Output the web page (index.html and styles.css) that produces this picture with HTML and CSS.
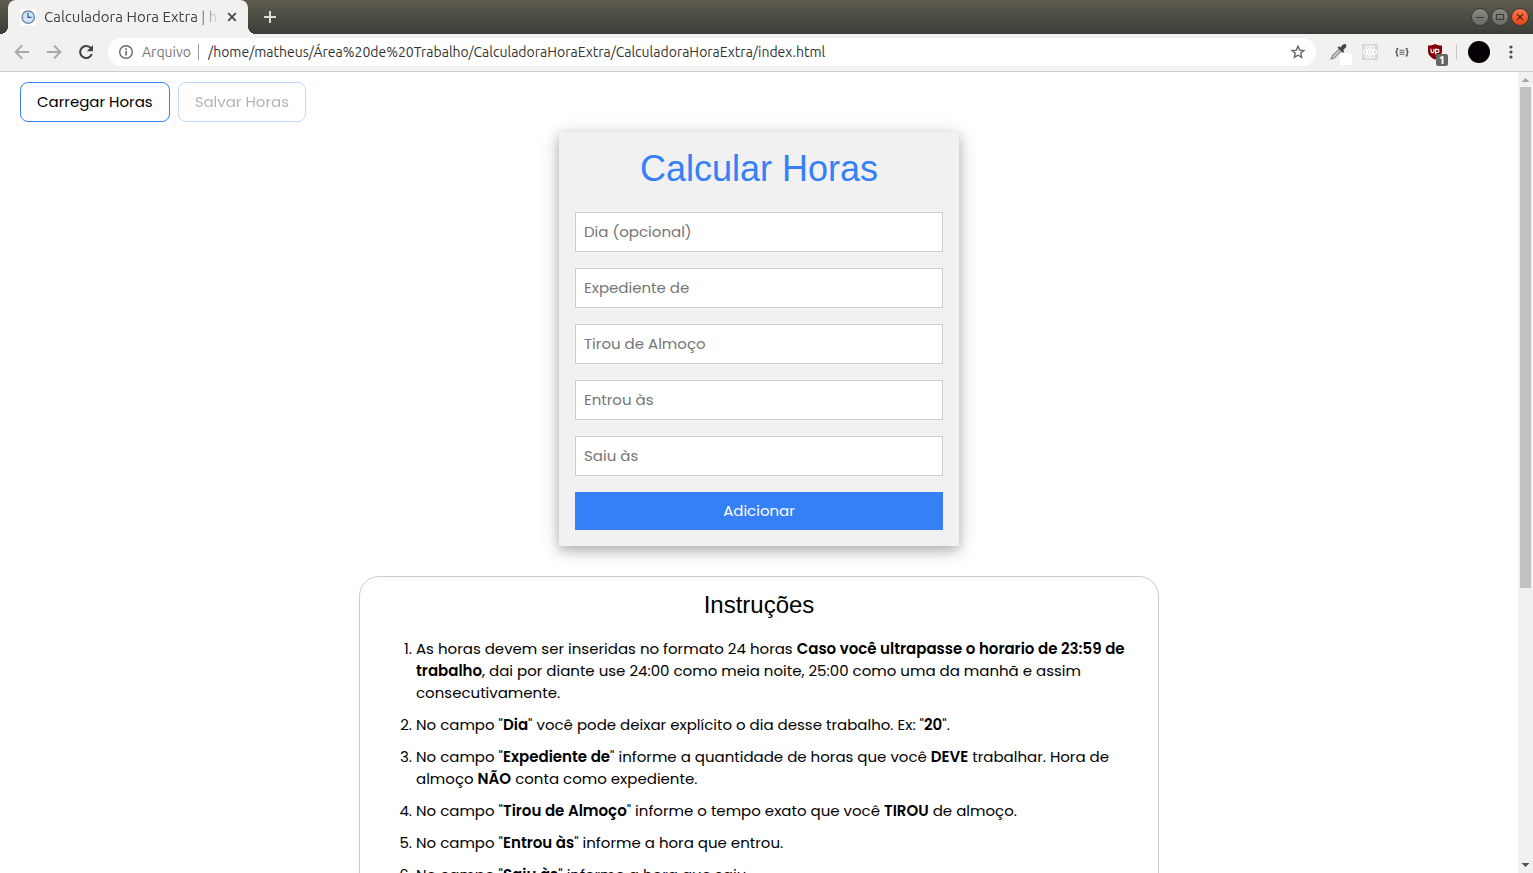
FILE: index.html
```html
<!DOCTYPE html>
<html lang="pt-BR">
<head>
<meta charset="utf-8">
<meta name="viewport" content="width=device-width, initial-scale=1">
<title>Calculadora Hora Extra</title>
<link rel="stylesheet" href="styles.css">
</head>
<body class="window">
<header class="titlebar">
  <div class="tab">
    <svg class="favicon" width="16" height="16" viewBox="0 0 16 16"><rect width="16" height="16" fill="#fff"/><circle cx="8.2" cy="8.2" r="6.2" fill="#d3e9fa" stroke="#6c8dab" stroke-width="1.4"/><path d="M8 4v4.3h3.6" fill="none" stroke="#31597e" stroke-width="1.2"/><path d="M8.2 12.3v1M3.2 8.3h1M12.4 8.3h1" stroke="#6c8dab" stroke-width=".8"/></svg>
    <span class="tab-title">Calculadora Hora Extra | h</span>
    <button class="icon-button tab-close" aria-label="Fechar guia"><svg width="10" height="10" viewBox="0 0 10 10"><path d="M1.2 1.2l7.6 7.6M8.8 1.2L1.2 8.8" stroke="#46494d" stroke-width="1.8"/></svg></button>
  </div>
  <button class="icon-button new-tab" aria-label="Nova guia"><svg width="12" height="12" viewBox="0 0 12 12"><path d="M6 0v12M0 6h12" stroke="#dedcd0" stroke-width="2"/></svg></button>
  <div class="window-controls">
    <button class="control" aria-label="Minimizar"><svg width="10" height="10" viewBox="0 0 10 10"><path d="M1 5.5h8" stroke="#3b3a35"/></svg></button>
    <button class="control" aria-label="Maximizar"><svg width="10" height="10" viewBox="0 0 10 10"><rect x="1.5" y="2.5" width="7" height="5" fill="none" stroke="#3b3a35"/></svg></button>
    <button class="control control-close" aria-label="Fechar"><svg width="10" height="10" viewBox="0 0 10 10"><path d="M2 2l6 6M8 2L2 8" stroke="#58210c" stroke-width="1.2"/></svg></button>
  </div>
</header>
<nav class="toolbar" aria-label="Navegador">
  <div class="nav-buttons">
    <button class="icon-button" aria-label="Voltar"><svg width="16" height="16" viewBox="0 0 16 16"><path d="M15 8H2M8 1.5L1.6 8 8 14.5" fill="none" stroke="#a9a9a7" stroke-width="1.9"/></svg></button>
    <button class="icon-button" aria-label="Avançar"><svg width="16" height="16" viewBox="0 0 16 16"><path d="M1 8h13M8 1.5L14.4 8 8 14.5" fill="none" stroke="#a9a9a7" stroke-width="1.9"/></svg></button>
    <button class="icon-button" aria-label="Recarregar"><svg width="16" height="16" viewBox="0 0 16 16"><path d="M13 4.5A6 6 0 1 0 13.8 10" fill="none" stroke="#414447" stroke-width="2.1"/><path d="M15 1v6.2H8.8z" fill="#414447"/></svg></button>
  </div>
  <div class="omnibox">
    <svg width="16" height="16" viewBox="0 0 16 16"><circle cx="8" cy="8" r="6.3" fill="none" stroke="#66686b" stroke-width="1.4"/><path d="M8 7v4.6M8 4.3v1.6" stroke="#66686b" stroke-width="1.6"/></svg>
    <span class="scheme">Arquivo</span>
    <input class="address" aria-label="Endereço" value="/home/matheus/Área%20de%20Trabalho/CalculadoraHoraExtra/CalculadoraHoraExtra/index.html">
    <button class="icon-button" aria-label="Favoritar"><svg width="16" height="16" viewBox="0 0 16 16"><path d="M8 2.200l1.700 3.900 4.200.4-3.200 2.800 1 4.100L8 11.200l-3.700 2.200 1-4.100-3.200-2.800 4.200-.4z" fill="none" stroke="#63666a" stroke-width="1.400"/></svg></button>
  </div>
  <div class="extensions">
    <button class="icon-button" aria-label="Conta-gotas"><svg width="24" height="24" viewBox="0 0 24 24"><path d="M3.2 18.8l1-2.8 7-7 2 2-7 7z" fill="#d5d7d8" stroke="#858789" stroke-width="1.2"/><path d="M9.5 7.5l1.4-1.3 1.4 1.2 2.5-2.6c2-2 5 .6 3 2.8l-2.7 2.6 1.2 1.4-1.4 1.4z" fill="#45494e"/><rect x="12" y="13" width="12" height="12" rx="1.5" fill="#fff"/></svg></button>
    <button class="icon-button" aria-label="React"><svg width="16" height="16" viewBox="0 0 16 16"><rect width="16" height="16" fill="#d9d9d8"/><g fill="none" stroke="#fff" stroke-width="1.1"><ellipse cx="8" cy="8" rx="6.7" ry="2.6"/><ellipse cx="8" cy="8" rx="6.7" ry="2.6" transform="rotate(60 8 8)"/><ellipse cx="8" cy="8" rx="6.7" ry="2.6" transform="rotate(120 8 8)"/></g><circle cx="8" cy="8" r="1.4" fill="#fff"/></svg></button>
    <button class="icon-button" aria-label="JSON"><svg width="16" height="16" viewBox="0 0 16 16"><path d="M4.3 4.4c-2 0-1.3 1-1.3 2.2S2.6 8 1.6 8.2C2.6 8.400 3 8.700 3 9.800s-.7 2.200 1.300 2.200M11.700 4.400c2 0 1.300 1 1.300 2.200s.4 1.400 1.400 1.600c-1 .2-1.400.5-1.400 1.600s.7 2.200-1.300 2.200" fill="none" stroke="#4b4b4a" stroke-width="1.300"/><path d="M5.500 6.200h5M5.500 8.200h5M5.500 10.200h5" stroke="#636362" stroke-width="1.100"/></svg></button>
    <button class="icon-button" aria-label="uBlock Origin, 1 bloqueio"><svg width="24" height="24" viewBox="0 0 24 24"><path d="M10 4c2.500 1.200 4.500 1.600 7 1.600V11c0 4.300-3.500 7-7 8.500C6.500 18 3 15.300 3 11V5.600C5.500 5.600 7.500 5.200 10 4z" fill="#830009"/><path d="M6 8.700v2.300q0 1.600 1.500 1.600T9 11V8.700" fill="none" stroke="#fff" stroke-width="1.200"/><path d="M10.600 14.500V9.300h1.800a1.600 1.600 0 1 1 0 3.200h-1.800" fill="none" stroke="#fff" stroke-width="1.200"/></svg><span class="badge">1</span></button>
  </div>
  <button class="avatar" aria-label="Perfil"></button>
  <button class="icon-button menu" aria-label="Menu"><svg width="4" height="16" viewBox="0 0 4 16"><g fill="#484b4e"><circle cx="2" cy="3" r="1.600"/><circle cx="2" cy="8" r="1.600"/><circle cx="2" cy="13" r="1.600"/></g></svg></button>
</nav>
<div class="viewport">
  <main class="page">
    <div class="actions">
      <button class="action">Carregar Horas</button>
      <button class="action" disabled>Salvar Horas</button>
    </div>
    <form class="card">
      <h1 class="card-title">Calcular Horas</h1>
      <input class="field" aria-label="Dia (opcional)" placeholder="Dia (opcional)">
      <input class="field" aria-label="Expediente de" placeholder="Expediente de">
      <input class="field" aria-label="Tirou de Almoço" placeholder="Tirou de Almoço">
      <input class="field" aria-label="Entrou às" placeholder="Entrou às">
      <input class="field" aria-label="Saiu às" placeholder="Saiu às">
      <button class="submit" type="button">Adicionar</button>
    </form>
    <section class="instructions">
      <h2 class="instructions-title">Instruções</h2>
      <ol class="steps">
        <li>As horas devem ser inseridas no formato 24 horas <b>Caso você ultrapasse o horario de 23:59 de trabalho</b>, dai por diante use 24:00 como meia noite, 25:00 como uma da manhã e assim consecutivamente.</li>
        <li>No campo "<b>Dia</b>" você pode deixar explícito o dia desse trabalho. Ex: "<b>20</b>".</li>
        <li>No campo "<b>Expediente de</b>" informe a quantidade de horas que você <b>DEVE</b> trabalhar. Hora de almoço <b>NÃO</b> conta como expediente.</li>
        <li>No campo "<b>Tirou de Almoço</b>" informe o tempo exato que você <b>TIROU</b> de almoço.</li>
        <li>No campo "<b>Entrou às</b>" informe a hora que entrou.</li>
        <li>No campo "<b>Saiu às</b>" informe a hora que saiu.</li>
      </ol>
    </section>
  </main>
  <div class="scrollbar" aria-hidden="true">
    <svg width="15" height="15" viewBox="0 0 15 15"><path d="M3.500 10L7.500 6l4 4z" fill="#a3a3a3"/></svg>
    <div class="track"><div class="thumb"></div></div>
    <svg width="15" height="15" viewBox="0 0 15 15"><path d="M3.500 5L7.500 9l4-4z" fill="#505050"/></svg>
  </div>
</div>
</body>
</html>
```

FILE: styles.css
```css
* { box-sizing: border-box; }

.window {
  display: flex;
  flex-direction: column;
  height: 100vh;
  margin: 0;
  overflow: hidden;
  background: #fff;
  color: #000;
  font: 15px/22px Poppins, Inter, sans-serif;
}

button, input { font: inherit; }
svg { display: block; flex: none; overflow: visible; }

.icon-button {
  position: relative;
  display: flex;
  flex: none;
  padding: 0;
  border: 0;
  background: none;
}

/* Title bar */
.titlebar {
  display: flex;
  flex: none;
  align-items: center;
  height: 34px;
  padding: 0 4px 0 8px;
  background: linear-gradient(#5d5c4e, #3d3c38);
}

.tab {
  position: relative;
  display: flex;
  align-items: center;
  width: 240px;
  height: 34px;
  padding: 0 11px 0 12px;
  border-radius: 8px 8px 0 0;
  background: #f2f1f0;
  color: #404040;
  font: 15px/20px Ubuntu, "Noto Sans", sans-serif;
}

.tab::before, .tab::after {
  content: "";
  position: absolute;
  bottom: 0;
  width: 8px;
  height: 8px;
}
.tab::before { right: 100%; background: radial-gradient(circle at 0 0, transparent 8px, #f2f1f0 8px); }
.tab::after { left: 100%; background: radial-gradient(circle at 100% 0, transparent 8px, #f2f1f0 8px); }

.tab-title {
  flex: 1;
  margin-left: 8px;
  overflow: hidden;
  white-space: nowrap;
  -webkit-mask-image: linear-gradient(to right, #000 86%, transparent);
  mask-image: linear-gradient(to right, #000 86%, transparent);
}
.tab-close { margin-left: 7px; }
.new-tab { margin-left: 16px; }

.window-controls {
  display: flex;
  gap: 2px;
  margin-left: auto;
}
.control {
  display: flex;
  align-items: center;
  justify-content: center;
  width: 18px;
  height: 18px;
  padding: 0;
  border: 1px solid #3a3934;
  border-radius: 50%;
  background: linear-gradient(#8b8a82, #6b6a63);
}
.control-close { background: linear-gradient(#fb7a55, #e8430f); }

/* Toolbar */
.toolbar {
  display: flex;
  flex: none;
  align-items: center;
  height: 38px;
  padding: 0 20px 1px 14px;
  border-bottom: 1px solid #cdcccb;
  background: #f2f1f0;
  font: 14px/20px Ubuntu, "Noto Sans", sans-serif;
}
.nav-buttons { display: flex; gap: 16px; }
.omnibox {
  display: flex;
  flex: 1;
  align-items: center;
  height: 28px;
  margin-left: 14px;
  padding: 0 10px;
  border-radius: 14px;
  background: #fff;
}
.scheme {
  margin-left: 8px;
  padding-right: 7px;
  border-right: 1px solid #a0a0a0;
  color: #757575;
  line-height: 16px;
}
.address {
  flex: 1;
  min-width: 0;
  padding: 0 0 0 9px;
  border: 0;
  outline: 0;
  background: none;
  color: #333;
}
.extensions {
  display: flex;
  align-items: center;
  gap: 16px;
  height: 24px;
  margin-left: 12px;
  padding-right: 9px;
}
.extensions .icon-button:first-child { margin-right: -6px; }
.extensions .icon-button:last-child { margin-left: -1px; }
.badge {
  position: absolute;
  right: 1px;
  bottom: -2px;
  width: 12px;
  height: 12px;
  border-radius: 2px;
  background: #666;
  color: #fff;
  font: bold 11px/12px "Noto Sans", sans-serif;
  text-align: center;
}
.avatar {
  width: 22px;
  height: 22px;
  margin-left: 11px;
  padding: 0;
  border: 0;
  border-radius: 50%;
  background: #050006;
}
.extensions::after {
  content: "";
  width: 1px;
  height: 16px;
  margin-left: -9px;
  margin-right: -9px;
  background: #cbcac9;
}
.menu { margin-left: 19px; }

/* Page */
.viewport {
  display: flex;
  flex: 1;
  min-height: 0;
}
.page {
  flex: 1;
  min-width: 0;
  padding: 10px 20px;
  overflow: hidden;
}
.actions {
  display: flex;
  gap: 8px;
}
.action {
  height: 40px;
  padding: 0 16px;
  border: 1px solid #3580f7;
  border-radius: 8px;
  background: #fff;
  color: #000;
}
.action:disabled {
  opacity: .3;
}

.card {
  display: flex;
  flex-direction: column;
  gap: 16px;
  max-width: 400px;
  margin: 10px auto 30px;
  padding: 10px 16px 16px;
  background: #f1f1f1;
  box-shadow: 0 4px 10px rgba(0, 0, 0, .2), 0 4px 20px rgba(0, 0, 0, .19);
}
.card-title, .instructions-title {
  margin: 0;
  font-family: "Liberation Sans", Arial, sans-serif;
  font-weight: 400;
  text-align: center;
}
.card-title {
  color: #3580f7;
  font-size: 36px;
  line-height: 54px;
}
.field {
  width: 100%;
  height: 40px;
  padding: 7px 8px 9px;
  border: 1px solid #ccc;
  background: #fff;
}
.field::placeholder { color: #757575; }
.submit {
  height: 38px;
  border: 0;
  background: #3580f7;
  color: #fff;
}

.instructions {
  max-width: 800px;
  margin: 0 auto;
  padding: 10px 16px;
  border: 1px solid #ccc;
  border-radius: 20px;
}
.instructions-title {
  font-size: 24px;
  line-height: 36px;
}
.steps {
  display: flex;
  flex-direction: column;
  gap: 10px;
  margin: 15px 0;
  padding: 0 0 0 40px;
}
.steps b { font-weight: 600; }

/* Scrollbar */
.scrollbar {
  display: flex;
  flex: none;
  flex-direction: column;
  width: 15px;
  background: #f1f1f1;
}
.track {
  flex: 1;
  padding: 0 2px;
}
.thumb {
  height: 65%;
  background: #c1c1c1;
}
```
